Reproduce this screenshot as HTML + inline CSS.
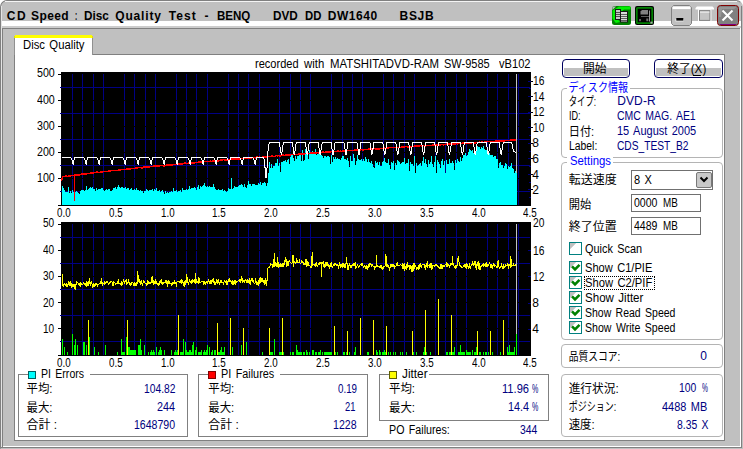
<!DOCTYPE html><html><head><meta charset="utf-8"><title>CD Speed</title><style>
html,body{margin:0;padding:0;background:#fff;}
body{width:743px;height:449px;overflow:hidden;position:relative;font-family:"Liberation Sans",sans-serif;}
#win{position:absolute;left:0;top:0;width:741px;height:448px;background:#c0c0c0;border:1px solid #808080;border-bottom-color:#c0c0c0;border-right-color:#c0c0c0;border-radius:7px 7px 0 0;box-sizing:content-box;width:741px;height:447px}
.a,.r,.t,.g,.rg,.btn,.ed,.cb,.ck{position:absolute;}
.t{white-space:pre;line-height:14px;}
.g{border:1px solid #808080;}
.rg{border:1px solid #b4b4b4;border-radius:4px;}
.btn{border:1px solid #000060;border-radius:4px;background:#fff;overflow:hidden}
.btn i{position:absolute;left:1px;right:1px;bottom:1px;height:8px;background:#c0c0c0;}
.ed{border:1px solid #707070;background:#fff;}
.cb{border:1px solid #787878;background:#c8c8c8;border-radius:2px}
.ck{width:11px;height:11px;border:1px solid #008080;background:linear-gradient(135deg,#c0c0c0 0,#c0c0c0 27%,#fff 28%);}
.jt text{font-family:"Liberation Sans","Noto Sans CJK JP",sans-serif;font-size:12px;}
</style></head><body><div id="win"></div>
<div class="r" style="left:5px;top:1px;width:732px;height:1px;background:#f4f4f4;"></div>
<div class="r" style="left:1px;top:6px;width:1px;height:441px;background:#e4e4e4;"></div>
<div class="r" style="left:2px;top:21px;width:739px;height:5px;background:#ffffff;"></div>
<div class="r" style="left:2px;top:26px;width:739px;height:2px;background:#cccccc;"></div>
<div class="r" style="left:2px;top:28px;width:739px;height:1px;background:#808080;"></div>
<div class="r" style="left:2px;top:28px;width:1px;height:419px;background:#808080;"></div>
<div class="r" style="left:740px;top:28px;width:1px;height:419px;background:#ffffff;"></div>
<div class="r" style="left:741px;top:6px;width:1px;height:442px;background:#808080;"></div>
<div class="r" style="left:3px;top:446px;width:738px;height:1px;background:#ffffff;"></div>
<div class="r" style="left:1px;top:447px;width:741px;height:1px;background:#808080;"></div>
<div class="r" style="left:14px;top:54px;width:711px;height:387px;background:#808080;"></div>
<div class="r" style="left:15px;top:55px;width:709px;height:385px;background:#ffffff;"></div>
<div class="r" style="left:14px;top:37px;width:79px;height:18px;background:#909090;"></div>
<div class="r" style="left:15px;top:38px;width:77px;height:17px;background:#ffffff;"></div>
<div class="r" style="left:15px;top:35px;width:77px;height:3px;background:#ffff00;"></div>
<div class="r" style="left:14px;top:36px;width:1px;height:2px;background:#e0e000;"></div>
<div class="r" style="left:92px;top:36px;width:1px;height:2px;background:#e0e000;"></div>
<div class="t" style="top:37.52px;font-size:12px;color:#000;left:22.60px;transform:scaleX(0.9410);transform-origin:0 0;word-spacing:1.342px;">Disc Quality</div>
<div class="t" style="top:9.22px;font-size:12px;color:#000;font-weight:bold;letter-spacing:1.568px;left:6.80px;">CD</div>
<div class="t" style="top:9.22px;font-size:12px;color:#000;font-weight:bold;letter-spacing:0.422px;left:31.00px;">Speed</div>
<div class="t" style="top:9.22px;font-size:12px;color:#000;font-weight:bold;left:75.20px;transform:scaleX(0.5505);transform-origin:0 0;">:</div>
<div class="t" style="top:9.22px;font-size:12px;color:#000;font-weight:bold;left:84.20px;transform:scaleX(0.9784);transform-origin:0 0;">Disc</div>
<div class="t" style="top:9.22px;font-size:12px;color:#000;font-weight:bold;letter-spacing:0.854px;left:115.20px;">Quality</div>
<div class="t" style="top:9.22px;font-size:12px;color:#000;font-weight:bold;letter-spacing:1.072px;left:168.70px;">Test</div>
<div class="t" style="top:9.22px;font-size:12px;color:#000;font-weight:bold;left:204.50px;">-</div>
<div class="t" style="top:9.22px;font-size:12px;color:#000;font-weight:bold;left:216.70px;transform:scaleX(0.9605);transform-origin:0 0;">BENQ</div>
<div class="t" style="top:9.22px;font-size:12px;color:#000;font-weight:bold;left:272.60px;transform:scaleX(0.9788);transform-origin:0 0;">DVD</div>
<div class="t" style="top:9.22px;font-size:12px;color:#000;font-weight:bold;left:305.10px;transform:scaleX(0.9462);transform-origin:0 0;">DD</div>
<div class="t" style="top:9.22px;font-size:12px;color:#000;font-weight:bold;letter-spacing:0.582px;left:327.70px;">DW1640</div>
<div class="t" style="top:9.22px;font-size:12px;color:#000;font-weight:bold;letter-spacing:0.663px;left:399.60px;">BSJB</div>
<svg class="a" style="left:605px;top:0" width="138" height="30" viewBox="605 0 138 30">
<!-- copy icon -->
<rect x="612" y="6" width="19" height="19" rx="2.5" fill="#008000"/>
<path d="M612.6 10.5L619 6.6H630.4V9.6H624L615.5 16.5L620 22L615.8 23L612.6 18.5Z" fill="#00f000"/>
<path d="M612.4 10V6.6H616Z" fill="#b8b8b8"/>
<rect x="615.5" y="9.5" width="5" height="10" fill="#c8c8c8" stroke="#181818"/>
<path d="M616 12.5h4M616 14.5h4M616 16.5h4" stroke="#505050"/>
<rect x="620.5" y="11.5" width="7" height="10.5" fill="#dcdcdc" stroke="#181818"/>
<path d="M621 14.5h6M621 16.5h6M621 18.5h6M621 20.5h6" stroke="#606060"/>
<!-- save icon -->
<rect x="635" y="6" width="19" height="19" rx="2" fill="#000"/>
<rect x="636.8" y="7.8" width="15.4" height="15.4" rx="1" fill="none" stroke="#008000" stroke-width="1.8"/>
<path d="M642 10h6v4.5h-7.5v-3z" fill="#808080"/>
<path d="M649.5 10.5v11" stroke="#989898"/>
<path d="M641 16.5h8" stroke="#585858"/>
<rect x="639.2" y="19" width="1.6" height="2.2" fill="#707070"/>
<rect x="646.3" y="18.5" width="2" height="2.7" fill="#707070"/>
<rect x="650.4" y="21.6" width="2.2" height="2" fill="#a8a8a8"/>
<!-- minimize -->
<path d="M673.5 5.5h16l2 2v16l-2 2h-16l-2-2v-16z" fill="#c0c0c0" stroke="#808080"/>
<rect x="672.5" y="6.5" width="18" height="2.6" fill="#fff"/>
<rect x="675.5" y="19" width="8" height="2.4" fill="#f4f4f4"/>
<rect x="676.3" y="18" width="7" height="2.6" fill="#000"/>
<!-- maximize (disabled) -->
<path d="M695.5 9.5v-1.5l1.5-1.6h15.5l1.5 1.6v1.5z" fill="#fff"/>
<rect x="698" y="9.4" width="13.4" height="12.4" fill="#fff"/>
<rect x="699.5" y="10.6" width="10.4" height="9.8" fill="#c4c4c4" stroke="#808080"/>
<rect x="700" y="11.6" width="9.4" height="1.2" fill="#e8e8e8"/>
<!-- close -->
<rect x="717.5" y="5.5" width="21" height="20" rx="3" fill="#808080" stroke="#800000"/><path d="M719 7h18l-3 2h-12l-1 8h-2z" fill="#a0a0a0" opacity="0.7"/><path d="M720 24.5h16" stroke="#800080"/>
<path d="M722.5 10.5l10 10M732.5 10.5l-10 10" stroke="#fff" stroke-width="2"/>
</svg>
<div class="t" style="top:56.82px;font-size:12px;color:#000;left:255.10px;transform:scaleX(0.9206);transform-origin:0 0;">recorded</div>
<div class="t" style="top:56.82px;font-size:12px;color:#000;left:303.50px;transform:scaleX(0.9466);transform-origin:0 0;">with</div>
<div class="t" style="top:56.82px;font-size:12px;color:#000;left:329.80px;transform:scaleX(0.9488);transform-origin:0 0;">MATSHITADVD-RAM</div>
<div class="t" style="top:56.82px;font-size:12px;color:#000;left:443.60px;transform:scaleX(0.9156);transform-origin:0 0;">SW-9585</div>
<div class="t" style="top:56.82px;font-size:12px;color:#000;left:499.30px;transform:scaleX(0.9258);transform-origin:0 0;">vB102</div>
<svg class="a" style="left:0;top:0" width="743" height="449" viewBox="0 0 743 449" shape-rendering="crispEdges"><rect x="61" y="72" width="470" height="134" fill="#000"/><path d="M61.5 72V206M61 205.5H531" stroke="#000"/><path d="M72.5 74V206M82.5 74V206M93.5 74V206M103.5 74V206M124.5 74V206M134.5 74V206M145.5 74V206M155.5 74V206M176.5 74V206M186.5 74V206M196.5 74V206M207.5 74V206M228.5 74V206M238.5 74V206M248.5 74V206M259.5 74V206M279.5 74V206M290.5 74V206M300.5 74V206M310.5 74V206M331.5 74V206M342.5 74V206M352.5 74V206M362.5 74V206M383.5 74V206M393.5 74V206M404.5 74V206M414.5 74V206M435.5 74V206M445.5 74V206M456.5 74V206M466.5 74V206M487.5 74V206M497.5 74V206M508.5 74V206M518.5 74V206" stroke="#000084" stroke-width="1" fill="none"/><path d="M61 100.5H531M61 126.5H531M61 152.5H531M61 178.5H531M61 205.5H531" stroke="#000" stroke-width="1" fill="none"/><path d="M60 87.5H530M60 113.5H530M60 139.5H530M60 165.5H530M60 191.5H530" stroke="#000084" stroke-width="1" fill="none"/><path d="M58 74.5H61M58 100.5H61M58 126.5H61M58 152.5H61M58 178.5H61M58 205.5H61" stroke="#000" stroke-width="1" fill="none"/><path d="M529 197.5H531M528 189.5H531M529 182.5H531M528 174.5H531M529 166.5H531M528 158.5H531M529 151.5H531M528 143.5H531M529 135.5H531M528 127.5H531M529 119.5H531M528 112.5H531M529 104.5H531M528 96.5H531M529 88.5H531M528 81.5H531" stroke="#000084" fill="none"/><path d="M531 189.5H533M531 174.5H533M531 158.5H533M531 143.5H533M531 127.5H533M531 112.5H533M531 96.5H533M531 81.5H533" stroke="#000" fill="none"/><path d="M516.5 74V205" stroke="#c0c0c0" shape-rendering="crispEdges"/><path d="M62 205V186H63V188H64V190H65V192H66V192H67V192H68V187H69V193H70V191H71V193H72V190H73V192H74V191H75V192H76V191H77V192H78V193H79V194H80V191H81V190H82V190H83V190H84V191H85V190H86V186H87V190H88V189H89V188H90V187H91V188H92V187H93V189H94V189H95V191H96V188H97V190H98V189H99V189H100V189H101V188H102V188H103V190H104V191H105V190H106V189H107V190H108V189H109V189H110V191H111V191H112V190H113V188H114V188H115V187H116V189H117V187H118V185H119V187H120V188H121V187H122V187H123V188H124V188H125V187H126V189H127V188H128V188H129V190H130V189H131V188H132V190H133V190H134V189H135V190H136V188H137V190H138V190H139V191H140V190H141V191H142V191H143V193H144V191H145V191H146V189H147V190H148V191H149V190H150V190H151V190H152V189H153V191H154V189H155V190H156V188H157V191H158V191H159V190H160V192H161V191H162V190H163V192H164V194H165V191H166V193H167V192H168V193H169V192H170V192H171V191H172V192H173V188H174V191H175V191H176V190H177V192H178V191H179V191H180V190H181V192H182V188H183V190H184V190H185V190H186V189H187V190H188V189H189V186H190V189H191V188H192V188H193V188H194V187H195V188H196V190H197V187H198V185H199V189H200V186H201V187H202V186H203V185H204V183H205V186H206V187H207V186H208V187H209V186H210V187H211V187H212V187H213V184H214V187H215V189H216V190H217V190H218V189H219V190H220V190H221V190H222V189H223V191H224V190H225V191H226V192H227V191H228V188H229V189H230V189H231V178H232V189H233V188H234V186H235V187H236V187H237V187H238V186H239V185H240V185H241V184H242V185H243V187H244V184H245V187H246V188H247V185H248V181H249V184H250V184H251V186H252V184H253V184H254V184H255V185H256V185H257V185H258V183H259V184H260V182H261V185H262V183H263V183H264V182H265V183H266V186H267V183H268V173H269V162H270V168H271V164H272V168H273V166H274V166H275V163H276V163H277V159H278V166H279V163H280V172H281V162H282V162H283V161H284V161H285V160H286V162H287V160H288V159H289V164H290V157H291V155H292V154H293V158H294V161H295V156H296V159H297V156H298V156H299V155H300V155H301V161H302V150H303V161H304V160H305V149H306V153H307V151H308V159H309V150H310V152H311V152H312V151H313V153H314V153H315V149H316V155H317V154H318V152H319V153H320V153H321V155H322V156H323V158H324V156H325V156H326V157H327V156H328V156H329V157H330V164H331V155H332V162H333V157H334V159H335V157H336V159H337V158H338V159H339V159H340V160H341V158H342V156H343V156H344V159H345V159H346V160H347V158H348V161H349V167H350V156H351V161H352V161H353V154H354V158H355V165H356V161H357V155H358V159H359V160H360V160H361V159H362V161H363V159H364V161H365V157H366V159H367V162H368V159H369V162H370V163H371V161H372V164H373V167H374V168H375V161H376V163H377V162H378V165H379V162H380V166H381V166H382V162H383V161H384V158H385V162H386V163H387V163H388V159H389V165H390V169H391V162H392V163H393V161H394V170H395V163H396V165H397V160H398V161H399V162H400V164H401V163H402V162H403V162H404V158H405V164H406V163H407V163H408V159H409V171H410V162H411V164H412V164H413V166H414V156H415V173H416V163H417V166H418V165H419V164H420V163H421V166H422V161H423V157H424V163H425V159H426V164H427V167H428V160H429V164H430V162H431V156H432V164H433V167H434V162H435V156H436V173H437V160H438V162H439V164H440V168H441V161H442V159H443V165H444V161H445V173H446V160H447V164H448V164H449V159H450V163H451V163H452V161H453V163H454V170H455V160H456V163H457V159H458V161H459V162H460V157H461V161H462V158H463V155H464V155H465V153H466V156H467V155H468V152H469V149H470V150H471V151H472V150H473V153H474V153H475V155H476V150H477V146H478V147H479V147H480V149H481V147H482V148H483V146H484V149H485V150H486V150H487V153H488V153H489V153H490V155H491V155H492V155H493V157H494V156H495V156H496V159H497V159H498V168H499V163H500V162H501V165H502V165H503V168H504V166H505V163H506V164H507V169H508V166H509V167H510V166H511V163H512V168H513V169H514V173H515V171H516V173H517V205Z" fill="#00ffff" shape-rendering="crispEdges"/><polyline points="61.5,181.0 62.0,179.0 63.0,176.7 64.0,176.6 65.0,176.1 66.0,176.3 67.0,176.2 68.0,176.5 69.0,175.9 70.0,176.2 71.0,175.7 72.0,175.5 73.0,175.4 74.0,175.3 75.0,175.2 76.0,175.0 77.0,174.9 78.0,174.8 79.0,175.1 80.0,174.5 81.0,174.8 82.0,173.9 83.0,174.6 84.0,174.0 85.0,173.5 86.0,174.2 87.0,173.3 88.0,173.6 89.0,173.4 90.0,173.3 91.0,172.8 92.0,173.1 93.0,173.4 94.0,172.8 95.0,172.3 96.0,172.6 97.0,172.1 98.0,172.4 99.0,172.7 100.0,172.2 101.0,172.0 102.0,171.9 103.0,171.8 104.0,171.7 105.0,171.6 106.0,171.5 107.0,171.8 108.0,171.2 109.0,171.1 110.0,171.0 111.0,170.9 112.0,170.4 113.0,170.7 114.0,170.6 115.0,170.5 116.0,170.4 117.0,170.7 118.0,170.5 119.0,169.6 120.0,169.9 121.0,169.8 122.0,169.7 123.0,169.6 124.0,169.1 125.0,169.8 126.0,169.3 127.0,168.8 128.0,169.1 129.0,169.0 130.0,168.9 131.0,168.8 132.0,168.7 133.0,168.2 134.0,168.5 135.0,168.4 136.0,167.9 137.0,168.1 138.0,167.6 139.0,167.5 140.0,167.8 141.0,167.7 142.0,168.0 143.0,167.5 144.0,167.0 145.0,166.9 146.0,167.2 147.0,167.1 148.0,167.4 149.0,166.9 150.0,166.8 151.0,166.7 152.0,166.6 153.0,166.5 154.0,166.0 155.0,166.4 156.0,165.9 157.0,166.2 158.0,166.1 159.0,166.0 160.0,165.5 161.0,165.8 162.0,165.7 163.0,165.6 164.0,165.9 165.0,165.8 166.0,165.3 167.0,165.2 168.0,165.1 169.0,165.0 170.0,164.9 171.0,164.8 172.0,165.1 173.0,164.6 174.0,164.5 175.0,164.4 176.0,164.4 177.0,164.3 178.0,164.2 179.0,164.1 180.0,164.4 181.0,163.9 182.0,164.2 183.0,163.7 184.0,163.6 185.0,163.1 186.0,163.4 187.0,163.3 188.0,163.3 189.0,163.2 190.0,163.1 191.0,162.6 192.0,162.9 193.0,162.8 194.0,163.1 195.0,162.2 196.0,162.5 197.0,162.4 198.0,162.4 199.0,161.9 200.0,162.6 201.0,162.1 202.0,162.4 203.0,162.3 204.0,161.8 205.0,161.7 206.0,161.7 207.0,161.6 208.0,161.5 209.0,161.4 210.0,161.3 211.0,161.2 212.0,161.5 213.0,160.7 214.0,161.0 215.0,161.3 216.0,161.2 217.0,161.1 218.0,160.6 219.0,160.9 220.0,160.5 221.0,160.0 222.0,159.9 223.0,159.8 224.0,159.7 225.0,160.4 226.0,159.6 227.0,159.9 228.0,159.8 229.0,159.7 230.0,159.2 231.0,159.1 232.0,159.5 233.0,159.0 234.0,159.3 235.0,159.2 236.0,158.7 237.0,159.0 238.0,159.0 239.0,158.9 240.0,158.8 241.0,158.3 242.0,158.6 243.0,158.6 244.0,158.5 245.0,158.4 246.0,158.7 247.0,157.8 248.0,158.1 249.0,158.1 250.0,158.0 251.0,157.9 252.0,157.8 253.0,157.7 254.0,157.7 255.0,157.6 256.0,157.9 257.0,157.0 258.0,157.7 259.0,157.3 260.0,157.2 261.0,157.5 262.0,157.4 263.0,157.0 264.0,156.9 265.0,156.8 266.0,157.1 267.0,156.2 268.0,156.6 269.0,156.5 270.0,156.4 271.0,156.3 272.0,155.9 273.0,156.2 274.0,156.5 275.0,156.4 276.0,155.5 277.0,155.9 278.0,155.8 279.0,155.7 280.0,156.0 281.0,155.6 282.0,155.5 283.0,155.0 284.0,155.3 285.0,155.3 286.0,155.2 287.0,154.7 288.0,155.0 289.0,155.0 290.0,154.9 291.0,154.8 292.0,154.3 293.0,154.3 294.0,154.6 295.0,154.5 296.0,154.4 297.0,154.4 298.0,154.3 299.0,154.2 300.0,154.1 301.0,154.1 302.0,153.6 303.0,154.3 304.0,153.8 305.0,153.8 306.0,153.3 307.0,153.2 308.0,153.5 309.0,153.5 310.0,153.4 311.0,152.9 312.0,152.9 313.0,152.8 314.0,153.1 315.0,152.6 316.0,153.0 317.0,152.9 318.0,152.4 319.0,153.1 320.0,152.3 321.0,152.6 322.0,152.5 323.0,152.1 324.0,152.4 325.0,152.3 326.0,151.8 327.0,152.2 328.0,152.1 329.0,152.0 330.0,152.0 331.0,151.5 332.0,151.4 333.0,152.1 334.0,151.7 335.0,151.6 336.0,151.5 337.0,151.5 338.0,151.0 339.0,151.7 340.0,151.3 341.0,151.2 342.0,151.5 343.0,151.0 344.0,151.0 345.0,150.9 346.0,151.2 347.0,150.4 348.0,150.7 349.0,150.6 350.0,150.2 351.0,150.5 352.0,150.4 353.0,150.3 354.0,150.3 355.0,149.8 356.0,150.1 357.0,149.7 358.0,150.0 359.0,149.9 360.0,149.9 361.0,149.8 362.0,149.7 363.0,150.1 364.0,149.6 365.0,149.5 366.0,149.5 367.0,149.4 368.0,149.7 369.0,148.9 370.0,148.8 371.0,149.5 372.0,149.1 373.0,149.4 374.0,148.5 375.0,148.8 376.0,148.8 377.0,149.1 378.0,148.6 379.0,149.0 380.0,148.5 381.0,148.4 382.0,148.4 383.0,148.3 384.0,147.8 385.0,148.2 386.0,148.5 387.0,148.0 388.0,148.0 389.0,147.9 390.0,147.4 391.0,147.8 392.0,147.7 393.0,147.7 394.0,147.6 395.0,147.5 396.0,147.5 397.0,147.8 398.0,147.3 399.0,147.3 400.0,147.2 401.0,147.5 402.0,147.1 403.0,147.0 404.0,147.3 405.0,146.5 406.0,146.8 407.0,146.7 408.0,147.1 409.0,146.6 410.0,146.9 411.0,146.9 412.0,146.4 413.0,146.4 414.0,146.3 415.0,145.8 416.0,146.2 417.0,146.1 418.0,146.4 419.0,146.0 420.0,145.5 421.0,145.8 422.0,145.8 423.0,145.3 424.0,145.6 425.0,145.6 426.0,145.9 427.0,145.5 428.0,145.4 429.0,145.3 430.0,145.7 431.0,145.2 432.0,145.5 433.0,145.1 434.0,145.0 435.0,145.0 436.0,144.9 437.0,145.2 438.0,145.2 439.0,144.7 440.0,145.0 441.0,144.6 442.0,144.5 443.0,144.9 444.0,144.8 445.0,144.3 446.0,144.3 447.0,144.2 448.0,144.1 449.0,144.1 450.0,144.0 451.0,143.6 452.0,143.9 453.0,143.8 454.0,144.2 455.0,144.1 456.0,143.6 457.0,143.6 458.0,143.9 459.0,143.5 460.0,143.4 461.0,143.3 462.0,143.3 463.0,143.2 464.0,143.2 465.0,143.1 466.0,142.6 467.0,143.0 468.0,142.9 469.0,142.9 470.0,142.8 471.0,143.1 472.0,142.7 473.0,142.6 474.0,142.6 475.0,142.9 476.0,142.8 477.0,142.4 478.0,142.3 479.0,142.3 480.0,142.2 481.0,142.5 482.0,142.1 483.0,142.4 484.0,142.4 485.0,141.9 486.0,141.8 487.0,141.8 488.0,141.7 489.0,141.7 490.0,141.6 491.0,141.9 492.0,141.9 493.0,141.4 494.0,141.4 495.0,141.3 496.0,141.2 497.0,141.2 498.0,141.1 499.0,141.1 500.0,141.0 501.0,140.9 502.0,140.9 503.0,140.8 504.0,141.2 505.0,140.7 506.0,140.2 507.0,140.6 508.0,140.5 509.0,140.5 510.0,140.8 511.0,140.0 512.0,140.3 513.0,140.2 514.0,139.8 515.0,140.1 516.0,140.1" fill="none" stroke="#ff0000" stroke-width="1.5" shape-rendering="crispEdges"/><path d="M74.5 174V201" stroke="#ff0000" stroke-width="1.6" shape-rendering="crispEdges"/><polyline points="62.0,157.5 70.1,157.5 71.3,158.5 72.3,161.0 73.3,165.0 74.1,159.5 74.9,157.5 83.1,157.5 84.3,158.5 85.3,161.0 86.3,165.0 87.1,159.5 87.9,157.5 96.1,157.5 97.3,158.5 98.3,161.0 99.3,165.0 100.1,159.5 100.9,157.5 109.1,157.5 110.3,158.5 111.3,161.0 112.3,165.0 113.1,159.5 113.9,157.5 122.1,157.5 123.3,158.5 124.3,161.0 125.3,165.0 126.1,159.5 126.9,157.5 135.1,157.5 136.3,158.5 137.3,161.0 138.3,165.0 139.1,159.5 139.9,157.5 148.1,157.5 149.3,158.5 150.3,161.0 151.3,165.0 152.1,159.5 152.9,157.5 161.1,157.5 162.3,158.5 163.3,161.0 164.3,165.0 165.1,159.5 165.9,157.5 174.1,157.5 175.3,158.5 176.3,161.0 177.3,165.0 178.1,159.5 178.9,157.5 187.1,157.5 188.3,158.5 189.3,161.0 190.3,165.0 191.1,159.5 191.9,157.5 200.1,157.5 201.3,158.5 202.3,161.0 203.3,165.0 204.1,159.5 204.9,157.5 213.1,157.5 214.3,158.5 215.3,161.0 216.3,165.0 217.1,159.5 217.9,157.5 226.1,157.5 227.3,158.5 228.3,161.0 229.3,165.0 230.1,159.5 230.9,157.5 239.1,157.5 240.3,158.5 241.3,161.0 242.3,165.0 243.1,159.5 243.9,157.5 252.1,157.5 253.3,158.5 254.3,161.0 255.3,165.0 256.1,159.5 256.9,157.5 263.8,157.5 264.8,164.0 265.6,177.5 266.6,177.5 267.4,160.0 268.4,146.0 269.5,142.5 279.4,142.5 280.9,152.5 281.4,155.0 281.9,152.5 283.4,142.5 292.3,142.5 293.8,152.5 294.3,155.0 294.8,152.5 296.3,142.5 305.3,142.5 306.8,152.5 307.3,155.0 307.8,152.5 309.3,142.5 318.2,142.5 319.7,152.5 320.2,155.0 320.7,152.5 322.2,142.5 331.1,142.5 332.6,152.5 333.1,155.0 333.6,152.5 335.1,142.5 344.0,142.5 345.5,152.5 346.0,155.0 346.5,152.5 348.0,142.5 357.0,142.5 358.5,152.5 359.0,155.0 359.5,152.5 361.0,142.5 369.9,142.5 371.4,152.5 371.9,155.0 372.4,152.5 373.9,142.5 382.8,142.5 384.3,152.5 384.8,155.0 385.3,152.5 386.8,142.5 395.8,142.5 397.3,152.5 397.8,155.0 398.3,152.5 399.8,142.5 408.7,142.5 410.2,152.5 410.7,155.0 411.2,152.5 412.7,142.5 421.6,142.5 423.1,152.5 423.6,155.0 424.1,152.5 425.6,142.5 434.6,142.5 436.1,152.5 436.6,155.0 437.1,152.5 438.6,142.5 447.5,142.5 449.0,152.5 449.5,155.0 450.0,152.5 451.5,142.5 460.4,142.5 461.9,152.5 462.4,155.0 462.9,152.5 464.4,142.5 473.3,142.5 474.8,152.5 475.3,155.0 475.8,152.5 477.3,142.5 486.3,142.5 487.8,152.5 488.3,155.0 488.8,152.5 490.3,142.5 499.2,142.5 500.7,152.5 501.2,155.0 501.7,152.5 503.2,142.5 511.7,142.5 513.5,151.5 516.0,152.5" fill="none" stroke="#ffffff" stroke-width="1" shape-rendering="crispEdges"/><rect x="61" y="222" width="470" height="134" fill="#000"/><path d="M61.5 222V356M61 355.5H531" stroke="#000"/><path d="M72.5 224V356M82.5 224V356M93.5 224V356M103.5 224V356M124.5 224V356M134.5 224V356M145.5 224V356M155.5 224V356M176.5 224V356M186.5 224V356M196.5 224V356M207.5 224V356M228.5 224V356M238.5 224V356M248.5 224V356M259.5 224V356M279.5 224V356M290.5 224V356M300.5 224V356M310.5 224V356M331.5 224V356M342.5 224V356M352.5 224V356M362.5 224V356M383.5 224V356M393.5 224V356M404.5 224V356M414.5 224V356M435.5 224V356M445.5 224V356M456.5 224V356M466.5 224V356M487.5 224V356M497.5 224V356M508.5 224V356M518.5 224V356" stroke="#000084" stroke-width="1" fill="none"/><path d="M61 250.5H531M61 276.5H531M61 302.5H531M61 328.5H531M61 355.5H531" stroke="#000" stroke-width="1" fill="none"/><path d="M60 237.5H530M60 263.5H530M60 289.5H530M60 315.5H530M60 341.5H530" stroke="#000084" stroke-width="1" fill="none"/><path d="M58 224.5H61M58 250.5H61M58 276.5H61M58 302.5H61M58 328.5H61M58 355.5H61" stroke="#000" stroke-width="1" fill="none"/><path d="M528 329.5H531M528 303.5H531M528 276.5H531M528 250.5H531" stroke="#000084" fill="none"/><path d="M62.5 355v-16M64.5 355v-8M67.5 355v-3M72.5 355v-21M74.5 355v-10M75.5 355v-16M77.5 355v-10M83.5 355v-13M84.5 355v-13M86.5 355v-10M89.5 355v-18M94.5 355v-8M98.5 355v-3M105.5 355v-10M117.5 355v-3M121.5 355v-16M122.5 355v-3M123.5 355v-3M124.5 355v-3M126.5 355v-18M127.5 355v-18M128.5 355v-8M129.5 355v-8M130.5 355v-5M131.5 355v-5M132.5 355v-5M133.5 355v-5M134.5 355v-5M135.5 355v-5M138.5 355v-10M139.5 355v-10M140.5 355v-16M141.5 355v-5M144.5 355v-10M148.5 355v-3M150.5 355v-3M151.5 355v-5M152.5 355v-3M153.5 355v-5M154.5 355v-3M156.5 355v-8M158.5 355v-3M159.5 355v-5M160.5 355v-8M161.5 355v-5M164.5 355v-5M171.5 355v-5M174.5 355v-3M175.5 355v-5M176.5 355v-3M177.5 355v-5M178.5 355v-3M180.5 355v-3M181.5 355v-3M182.5 355v-3M183.5 355v-16M185.5 355v-13M186.5 355v-5M187.5 355v-3M188.5 355v-3M189.5 355v-5M190.5 355v-5M191.5 355v-3M192.5 355v-10M193.5 355v-13M195.5 355v-5M196.5 355v-8M198.5 355v-3M199.5 355v-3M200.5 355v-3M201.5 355v-5M203.5 355v-3M204.5 355v-5M205.5 355v-3M206.5 355v-5M207.5 355v-10M209.5 355v-8M211.5 355v-3M212.5 355v-5M214.5 355v-5M215.5 355v-5M217.5 355v-3M218.5 355v-3M219.5 355v-3M220.5 355v-5M221.5 355v-8M222.5 355v-3M223.5 355v-3M224.5 355v-8M230.5 355v-8M232.5 355v-8M241.5 355v-10M246.5 355v-13M262.5 355v-3M270.5 355v-3M271.5 355v-3M272.5 355v-3M274.5 355v-16M279.5 355v-3M280.5 355v-3M281.5 355v-3M283.5 355v-3M290.5 355v-3M292.5 355v-3M293.5 355v-3M296.5 355v-10M297.5 355v-5M298.5 355v-3M299.5 355v-3M300.5 355v-3M301.5 355v-3M303.5 355v-3M304.5 355v-3M306.5 355v-5M307.5 355v-3M309.5 355v-3M312.5 355v-5M313.5 355v-5M315.5 355v-3M316.5 355v-3M318.5 355v-3M319.5 355v-3M320.5 355v-5M322.5 355v-3M324.5 355v-3M325.5 355v-3M326.5 355v-3M327.5 355v-3M328.5 355v-3M329.5 355v-3M330.5 355v-3M331.5 355v-3M335.5 355v-3M337.5 355v-3M343.5 355v-3M344.5 355v-3M346.5 355v-3M349.5 355v-3M354.5 355v-3M355.5 355v-8M367.5 355v-3M368.5 355v-3M376.5 355v-5M377.5 355v-3M379.5 355v-5M380.5 355v-3M382.5 355v-3M383.5 355v-3M384.5 355v-5M385.5 355v-3M388.5 355v-3M390.5 355v-3M393.5 355v-3M395.5 355v-3M400.5 355v-3M402.5 355v-3M406.5 355v-3M413.5 355v-3M416.5 355v-3M423.5 355v-3M424.5 355v-8M426.5 355v-3M430.5 355v-3M446.5 355v-3M447.5 355v-3M449.5 355v-3M450.5 355v-3M451.5 355v-3M452.5 355v-3M453.5 355v-3M454.5 355v-8M458.5 355v-3M459.5 355v-3M460.5 355v-10M461.5 355v-3M462.5 355v-3M463.5 355v-3M464.5 355v-3M466.5 355v-5M467.5 355v-3M468.5 355v-3M469.5 355v-3M470.5 355v-3M472.5 355v-5M474.5 355v-3M475.5 355v-3M476.5 355v-8M477.5 355v-3M479.5 355v-3M480.5 355v-3M483.5 355v-3M485.5 355v-3M486.5 355v-3M488.5 355v-3M490.5 355v-3M492.5 355v-3M500.5 355v-3M507.5 355v-8M508.5 355v-3M509.5 355v-10M510.5 355v-3M511.5 355v-3M512.5 355v-3M513.5 355v-3M514.5 355v-8M516.5 355v-21" stroke="#00ff00" shape-rendering="crispEdges"/><path d="M88.5 355V320M127.5 355V320M178.5 355V315M217.5 355V323M230.5 355V318M243.5 355V328M269.5 355V328M282.5 355V318M334.5 355V326M347.5 355V331M360.5 355V318M373.5 355V320M386.5 355V326M412.5 355V331M425.5 355V310M438.5 355V299M451.5 355V315M477.5 355V331M490.5 355V331M503.5 355V320" stroke="#ffff00" shape-rendering="crispEdges"/><polyline points="62.0,274.0 62.5,285.3 63.0,285.5 63.6,286.0 64.1,283.5 64.7,284.6 65.2,285.7 65.8,284.4 66.3,284.1 66.9,286.4 67.4,286.7 68.0,283.7 68.5,282.3 69.1,285.2 69.6,284.0 70.2,280.7 70.7,284.1 71.3,287.5 71.8,284.6 72.4,285.6 72.9,283.7 73.5,286.1 74.0,287.0 74.6,283.8 75.1,289.6 75.7,285.7 76.2,283.7 76.8,282.0 77.3,282.1 77.9,282.6 78.4,284.1 79.0,283.4 79.5,284.5 80.1,282.8 80.6,285.3 81.2,283.9 81.7,284.9 82.3,284.7 82.8,285.0 83.4,282.8 83.9,283.2 84.5,284.2 85.0,285.3 85.6,283.8 86.1,286.6 86.7,281.4 87.2,286.1 87.8,282.8 88.3,281.1 88.9,285.6 89.4,278.2 90.0,282.1 90.5,284.5 91.1,283.3 91.6,282.2 92.2,284.9 92.7,287.1 93.3,286.0 93.8,283.0 94.4,285.1 94.9,286.7 95.5,284.0 96.0,283.5 96.6,284.4 97.1,284.1 97.7,287.1 98.2,284.3 98.8,284.8 99.3,283.6 99.9,283.7 100.4,282.3 101.0,284.2 101.5,278.3 102.1,282.3 102.6,285.6 103.2,283.5 103.7,283.6 104.3,282.3 104.8,284.5 105.4,282.2 105.9,282.7 106.5,281.8 107.0,281.3 107.6,281.9 108.1,283.0 108.7,284.2 109.2,283.1 109.8,282.6 110.3,282.6 110.9,281.0 111.4,281.4 112.0,281.6 112.5,282.9 113.1,286.2 113.6,281.2 114.2,282.9 114.7,282.8 115.3,283.3 115.8,284.7 116.4,283.4 116.9,283.1 117.5,281.8 118.0,283.7 118.6,279.1 119.1,283.6 119.7,283.1 120.2,283.1 120.8,284.1 121.3,282.7 121.9,285.8 122.4,283.8 123.0,281.7 123.5,280.1 124.1,281.4 124.6,282.9 125.2,281.3 125.7,281.0 126.3,278.7 126.8,285.2 127.4,282.8 127.9,282.3 128.5,279.3 129.0,282.5 129.6,284.9 130.1,282.8 130.7,285.6 131.2,282.0 131.8,283.9 132.3,282.6 132.9,282.6 133.4,283.2 134.0,285.6 134.5,282.6 135.1,284.4 135.6,285.1 136.2,282.9 136.7,284.7 137.3,283.9 137.8,271.5 138.4,280.3 138.9,281.8 139.5,280.3 140.0,283.1 140.6,284.0 141.1,280.0 141.7,282.4 142.2,285.1 142.8,285.2 143.3,281.3 143.9,280.7 144.4,281.4 145.0,282.9 145.6,283.6 146.1,284.4 146.7,286.3 147.2,280.4 147.8,285.1 148.3,280.9 148.9,284.4 149.4,282.0 150.0,284.3 150.5,282.3 151.1,282.5 151.6,279.5 152.2,276.2 152.7,281.7 153.3,284.5 153.8,280.5 154.4,282.1 154.9,283.2 155.5,278.7 156.0,284.2 156.6,282.1 157.1,284.0 157.7,284.1 158.2,283.4 158.8,285.6 159.3,284.6 159.9,281.4 160.4,281.8 161.0,280.6 161.5,278.6 162.1,284.5 162.6,281.9 163.2,283.8 163.7,282.1 164.3,282.2 164.8,282.8 165.4,281.3 165.9,282.8 166.5,281.5 167.0,284.1 167.6,286.8 168.1,280.4 168.7,283.9 169.2,281.8 169.8,283.5 170.3,283.0 170.9,283.1 171.4,284.7 172.0,285.3 172.5,282.2 173.1,282.0 173.6,282.5 174.2,284.0 174.7,279.9 175.3,283.7 175.8,282.8 176.4,287.0 176.9,282.1 177.5,281.1 178.0,281.2 178.6,281.9 179.1,282.3 179.7,282.8 180.2,280.4 180.8,282.7 181.3,279.4 181.9,283.0 182.4,281.6 183.0,283.3 183.5,282.6 184.1,286.6 184.6,281.7 185.2,281.0 185.7,283.6 186.3,282.4 186.8,274.3 187.4,282.9 187.9,281.7 188.5,283.4 189.0,282.3 189.6,279.1 190.1,282.1 190.7,282.0 191.2,280.8 191.8,283.5 192.3,282.9 192.9,279.4 193.4,281.6 194.0,282.2 194.5,279.1 195.1,283.6 195.6,273.0 196.2,281.3 196.7,282.9 197.3,282.7 197.8,281.9 198.4,284.1 198.9,277.1 199.5,280.1 200.0,282.5 200.6,282.3 201.1,281.8 201.7,281.1 202.2,281.2 202.8,281.2 203.3,281.9 203.9,284.7 204.4,281.4 205.0,282.5 205.5,284.3 206.1,283.2 206.6,281.9 207.2,281.3 207.7,282.6 208.3,279.0 208.8,281.9 209.4,281.8 209.9,283.8 210.5,282.7 211.0,279.6 211.6,283.0 212.1,282.0 212.7,279.7 213.2,278.8 213.8,282.3 214.3,283.6 214.9,280.9 215.4,284.4 216.0,282.9 216.5,279.8 217.1,280.5 217.6,284.0 218.2,282.4 218.7,278.6 219.3,284.5 219.8,283.1 220.4,280.6 220.9,283.0 221.5,280.2 222.0,283.1 222.6,282.4 223.1,282.9 223.7,284.9 224.2,280.4 224.8,280.4 225.3,282.3 225.9,282.9 226.4,280.1 227.0,284.7 227.5,281.3 228.1,281.6 228.6,280.0 229.2,279.2 229.7,281.0 230.3,280.7 230.8,280.8 231.4,282.6 231.9,284.3 232.5,280.3 233.0,284.9 233.6,281.8 234.1,280.4 234.7,281.3 235.2,285.4 235.8,281.6 236.3,282.4 236.9,281.4 237.4,281.4 238.0,281.0 238.5,280.1 239.1,279.8 239.6,282.3 240.2,279.6 240.7,281.6 241.3,280.8 241.8,277.5 242.4,279.0 242.9,282.8 243.5,280.1 244.0,280.3 244.6,282.4 245.1,279.8 245.7,279.9 246.2,280.9 246.8,283.3 247.3,279.2 247.9,282.9 248.4,281.0 249.0,281.3 249.5,278.2 250.1,284.9 250.6,282.7 251.2,278.4 251.7,280.7 252.3,278.4 252.8,282.1 253.4,279.7 253.9,282.9 254.5,283.3 255.0,283.3 255.6,277.6 256.1,281.8 256.7,283.8 257.2,281.7 257.8,284.4 258.3,285.0 258.9,280.4 259.4,278.4 260.0,283.5 260.5,278.2 261.1,278.8 261.6,281.4 262.2,281.2 262.7,278.3 263.3,281.8 263.8,280.7 264.4,280.8 264.9,285.1 265.5,279.3 266.0,280.1 266.6,285.5 267.1,280.0 267.7,270.0 268.2,267.3 268.8,267.0 269.3,267.4 269.9,266.3 270.4,264.1 271.0,264.8 271.5,264.9 272.1,264.9 272.6,268.4 273.2,265.7 273.7,265.4 274.3,252.8 274.8,266.7 275.4,265.2 275.9,262.9 276.5,264.4 277.0,267.1 277.6,257.5 278.1,262.9 278.7,267.5 279.2,263.8 279.8,265.8 280.3,264.4 280.9,266.1 281.4,263.8 282.0,267.3 282.5,265.6 283.1,263.0 283.6,267.1 284.2,264.5 284.7,260.5 285.3,262.2 285.8,258.8 286.4,260.1 286.9,266.6 287.5,260.7 288.0,266.0 288.6,262.0 289.1,261.4 289.7,260.5 290.2,262.6 290.8,262.6 291.3,263.2 291.9,262.9 292.4,262.2 293.0,254.6 293.5,266.8 294.1,261.2 294.6,262.3 295.2,262.9 295.7,263.1 296.3,262.0 296.8,258.3 297.4,262.3 297.9,262.2 298.5,262.1 299.0,262.0 299.6,260.4 300.1,263.1 300.7,263.9 301.2,262.7 301.8,260.4 302.3,262.6 302.9,262.3 303.4,262.8 304.0,264.5 304.5,263.4 305.1,263.8 305.6,259.5 306.2,266.5 306.7,258.9 307.3,262.6 307.8,266.0 308.4,261.8 308.9,265.4 309.5,265.7 310.0,265.7 310.6,267.1 311.1,267.2 311.7,262.1 312.2,252.3 312.8,266.2 313.3,264.0 313.9,264.2 314.4,265.2 315.0,265.2 315.5,267.3 316.1,262.0 316.6,264.6 317.2,266.8 317.7,266.3 318.3,263.4 318.8,263.0 319.4,265.2 319.9,262.4 320.5,262.6 321.0,263.8 321.6,264.8 322.1,261.9 322.7,263.5 323.2,261.0 323.8,265.7 324.3,268.1 324.9,264.4 325.4,262.4 326.0,266.6 326.5,262.4 327.1,262.5 327.6,264.3 328.2,266.1 328.7,264.9 329.3,265.7 329.8,268.6 330.4,263.3 330.9,264.9 331.5,263.4 332.0,266.5 332.6,267.5 333.1,265.3 333.7,264.1 334.2,263.9 334.8,266.3 335.3,263.3 335.9,264.5 336.4,264.6 337.0,265.4 337.5,264.9 338.1,265.7 338.6,269.1 339.2,265.2 339.7,263.2 340.3,265.0 340.8,268.1 341.4,264.3 341.9,264.7 342.5,268.3 343.0,262.9 343.6,265.2 344.1,267.8 344.7,265.9 345.2,262.7 345.8,267.7 346.3,256.7 346.9,263.3 347.4,264.4 348.0,270.0 348.5,265.8 349.1,265.6 349.6,263.2 350.2,267.9 350.7,266.2 351.3,267.3 351.8,265.6 352.4,265.1 352.9,265.7 353.5,264.3 354.0,263.5 354.6,265.9 355.1,262.4 355.7,267.5 356.2,266.5 356.8,267.2 357.3,264.6 357.9,265.2 358.4,267.2 359.0,266.7 359.5,265.8 360.1,264.7 360.6,264.4 361.2,263.5 361.7,265.1 362.3,264.3 362.8,265.8 363.4,267.5 363.9,267.1 364.5,265.5 365.0,266.2 365.6,267.4 366.1,269.3 366.7,264.9 367.2,269.8 367.8,268.3 368.3,264.1 368.9,267.9 369.4,263.8 370.0,263.3 370.5,264.8 371.1,264.5 371.6,266.1 372.2,264.5 372.7,265.3 373.3,266.5 373.8,266.0 374.4,268.2 374.9,266.3 375.5,266.5 376.0,267.8 376.6,255.0 377.1,267.1 377.7,266.6 378.2,266.0 378.8,266.3 379.3,267.3 379.9,266.6 380.4,267.1 381.0,265.3 381.5,268.2 382.1,268.4 382.6,269.0 383.2,265.7 383.7,267.4 384.3,266.1 384.8,266.4 385.4,264.1 385.9,253.6 386.5,266.2 387.0,265.9 387.6,263.9 388.1,267.9 388.7,266.2 389.2,267.9 389.8,270.4 390.3,264.4 390.9,266.2 391.4,264.2 392.0,267.1 392.5,265.3 393.1,267.0 393.6,264.6 394.2,268.5 394.7,265.6 395.3,266.4 395.8,266.5 396.4,263.9 396.9,265.2 397.5,263.8 398.0,265.9 398.6,265.1 399.1,265.2 399.7,265.6 400.2,265.0 400.8,264.5 401.3,265.7 401.9,265.4 402.4,264.5 403.0,268.6 403.5,266.7 404.1,263.3 404.6,269.2 405.2,268.0 405.7,267.0 406.3,268.6 406.8,265.7 407.4,262.0 407.9,267.7 408.5,266.1 409.0,264.7 409.6,268.3 410.1,267.0 410.7,265.7 411.2,271.5 411.8,267.1 412.3,265.0 412.9,272.0 413.4,265.8 414.0,262.8 414.5,269.1 415.1,266.8 415.6,264.9 416.2,267.3 416.7,269.1 417.3,266.9 417.8,269.0 418.4,264.7 418.9,269.7 419.5,265.1 420.0,265.5 420.6,264.1 421.1,267.3 421.7,265.9 422.2,264.7 422.8,264.5 423.3,264.3 423.9,264.9 424.4,267.6 425.0,264.4 425.5,269.9 426.1,265.9 426.6,263.8 427.2,262.8 427.7,266.5 428.3,265.7 428.8,265.6 429.4,264.8 429.9,268.2 430.5,264.6 431.0,263.1 431.6,270.2 432.1,269.0 432.7,265.8 433.2,265.7 433.8,265.8 434.3,266.1 434.9,265.7 435.4,265.3 436.0,264.4 436.5,265.2 437.1,265.7 437.6,266.0 438.2,267.9 438.7,267.0 439.3,268.1 439.8,267.1 440.4,268.6 440.9,264.5 441.5,264.8 442.0,268.9 442.6,265.5 443.1,265.1 443.7,266.4 444.2,266.7 444.8,265.5 445.3,264.3 445.9,264.1 446.4,262.6 447.0,267.1 447.5,263.6 448.1,265.2 448.6,265.0 449.2,265.9 449.7,266.8 450.3,263.4 450.8,265.9 451.4,263.6 451.9,264.7 452.5,256.0 453.0,264.7 453.6,263.9 454.1,266.6 454.7,267.2 455.2,267.7 455.8,265.1 456.3,267.5 456.9,265.7 457.4,265.3 458.0,258.1 458.5,256.0 459.1,263.2 459.6,264.9 460.2,265.9 460.7,265.7 461.3,267.2 461.8,266.7 462.4,267.1 462.9,267.3 463.5,265.9 464.0,265.7 464.6,266.2 465.1,264.1 465.7,267.7 466.2,262.8 466.8,268.5 467.3,263.8 467.9,266.3 468.4,267.1 469.0,268.4 469.5,262.7 470.1,266.1 470.6,267.7 471.2,265.7 471.7,265.8 472.3,263.3 472.8,261.4 473.4,265.3 473.9,265.0 474.5,264.2 475.0,261.1 475.6,263.0 476.1,269.6 476.7,267.7 477.2,262.4 477.8,264.1 478.3,268.5 478.9,261.3 479.4,266.8 480.0,269.9 480.5,266.3 481.1,266.5 481.6,265.5 482.2,264.6 482.7,265.0 483.3,265.8 483.8,263.1 484.4,265.2 484.9,264.3 485.5,264.0 486.0,266.8 486.6,262.5 487.1,266.7 487.7,264.6 488.2,264.8 488.8,265.3 489.3,262.4 489.9,263.1 490.4,267.5 491.0,264.5 491.5,267.1 492.1,268.3 492.6,266.1 493.2,265.5 493.7,263.4 494.3,266.7 494.8,264.9 495.4,265.7 495.9,265.6 496.5,266.4 497.0,268.3 497.6,263.3 498.1,260.5 498.7,265.2 499.2,268.5 499.8,268.0 500.3,266.4 500.9,267.7 501.4,263.1 502.0,267.3 502.5,266.5 503.1,269.1 503.6,264.4 504.2,267.7 504.7,266.9 505.3,266.0 505.8,264.9 506.4,265.8 506.9,265.8 507.5,264.9 508.0,263.5 508.6,267.2 509.1,266.1 509.7,264.4 510.2,267.5 510.8,256.2 511.3,262.2 511.9,266.5 512.4,265.4 513.0,265.1 513.5,263.9 514.1,266.2 514.6,265.5 515.2,265.8 515.7,264.3" fill="none" stroke="#ffff00" stroke-width="1" shape-rendering="crispEdges"/><path d="M321.5 262V277" stroke="#ffff00" shape-rendering="crispEdges"/><path d="M516.5 224V334" stroke="#c0c0c0" shape-rendering="crispEdges"/></svg>
<div class="t" style="top:66.42px;font-size:12px;color:#000;left:36.80px;transform:scaleX(0.8890);transform-origin:0 0;">500</div>
<div class="t" style="top:93.32px;font-size:12px;color:#000;left:36.80px;transform:scaleX(0.8890);transform-origin:0 0;">400</div>
<div class="t" style="top:119.12px;font-size:12px;color:#000;left:36.80px;transform:scaleX(0.8890);transform-origin:0 0;">300</div>
<div class="t" style="top:145.12px;font-size:12px;color:#000;left:36.80px;transform:scaleX(0.8890);transform-origin:0 0;">200</div>
<div class="t" style="top:171.12px;font-size:12px;color:#000;left:36.80px;transform:scaleX(0.8890);transform-origin:0 0;">100</div>
<div class="t" style="top:183.06px;font-size:12px;color:#000;left:532.26px;">2</div>
<div class="t" style="top:167.50px;font-size:12px;color:#000;left:532.26px;">4</div>
<div class="t" style="top:151.94px;font-size:12px;color:#000;left:532.26px;">6</div>
<div class="t" style="top:136.38px;font-size:12px;color:#000;left:532.26px;">8</div>
<div class="t" style="top:120.82px;font-size:12px;color:#000;left:532.80px;transform:scaleX(0.8541);transform-origin:0 0;">10</div>
<div class="t" style="top:105.26px;font-size:12px;color:#000;left:532.80px;transform:scaleX(0.8541);transform-origin:0 0;">12</div>
<div class="t" style="top:89.70px;font-size:12px;color:#000;left:532.80px;transform:scaleX(0.8541);transform-origin:0 0;">14</div>
<div class="t" style="top:74.14px;font-size:12px;color:#000;left:532.80px;transform:scaleX(0.8541);transform-origin:0 0;">16</div>
<div class="t" style="top:205.82px;font-size:12px;color:#000;left:56.80px;transform:scaleX(0.8153);transform-origin:0 0;">0.0</div>
<div class="t" style="top:355.82px;font-size:12px;color:#000;left:56.80px;transform:scaleX(0.8153);transform-origin:0 0;">0.0</div>
<div class="t" style="top:205.82px;font-size:12px;color:#000;left:108.65px;transform:scaleX(0.8153);transform-origin:0 0;">0.5</div>
<div class="t" style="top:355.82px;font-size:12px;color:#000;left:108.65px;transform:scaleX(0.8153);transform-origin:0 0;">0.5</div>
<div class="t" style="top:205.82px;font-size:12px;color:#000;left:160.50px;transform:scaleX(0.8153);transform-origin:0 0;">1.0</div>
<div class="t" style="top:355.82px;font-size:12px;color:#000;left:160.50px;transform:scaleX(0.8153);transform-origin:0 0;">1.0</div>
<div class="t" style="top:205.82px;font-size:12px;color:#000;left:212.35px;transform:scaleX(0.8153);transform-origin:0 0;">1.5</div>
<div class="t" style="top:355.82px;font-size:12px;color:#000;left:212.35px;transform:scaleX(0.8153);transform-origin:0 0;">1.5</div>
<div class="t" style="top:205.82px;font-size:12px;color:#000;left:264.20px;transform:scaleX(0.8153);transform-origin:0 0;">2.0</div>
<div class="t" style="top:355.82px;font-size:12px;color:#000;left:264.20px;transform:scaleX(0.8153);transform-origin:0 0;">2.0</div>
<div class="t" style="top:205.82px;font-size:12px;color:#000;left:316.05px;transform:scaleX(0.8153);transform-origin:0 0;">2.5</div>
<div class="t" style="top:355.82px;font-size:12px;color:#000;left:316.05px;transform:scaleX(0.8153);transform-origin:0 0;">2.5</div>
<div class="t" style="top:205.82px;font-size:12px;color:#000;left:367.90px;transform:scaleX(0.8153);transform-origin:0 0;">3.0</div>
<div class="t" style="top:355.82px;font-size:12px;color:#000;left:367.90px;transform:scaleX(0.8153);transform-origin:0 0;">3.0</div>
<div class="t" style="top:205.82px;font-size:12px;color:#000;left:419.75px;transform:scaleX(0.8153);transform-origin:0 0;">3.5</div>
<div class="t" style="top:355.82px;font-size:12px;color:#000;left:419.75px;transform:scaleX(0.8153);transform-origin:0 0;">3.5</div>
<div class="t" style="top:205.82px;font-size:12px;color:#000;left:471.60px;transform:scaleX(0.8153);transform-origin:0 0;">4.0</div>
<div class="t" style="top:355.82px;font-size:12px;color:#000;left:471.60px;transform:scaleX(0.8153);transform-origin:0 0;">4.0</div>
<div class="t" style="top:205.82px;font-size:12px;color:#000;left:523.45px;transform:scaleX(0.8153);transform-origin:0 0;">4.5</div>
<div class="t" style="top:355.82px;font-size:12px;color:#000;left:523.45px;transform:scaleX(0.8153);transform-origin:0 0;">4.5</div>
<div class="t" style="top:215.82px;font-size:12px;color:#000;left:43.00px;transform:scaleX(0.8391);transform-origin:0 0;">50</div>
<div class="t" style="top:243.42px;font-size:12px;color:#000;left:43.00px;transform:scaleX(0.8391);transform-origin:0 0;">40</div>
<div class="t" style="top:269.42px;font-size:12px;color:#000;left:43.00px;transform:scaleX(0.8391);transform-origin:0 0;">30</div>
<div class="t" style="top:295.62px;font-size:12px;color:#000;left:43.00px;transform:scaleX(0.8391);transform-origin:0 0;">20</div>
<div class="t" style="top:322.12px;font-size:12px;color:#000;left:43.00px;transform:scaleX(0.8391);transform-origin:0 0;">10</div>
<div class="t" style="top:215.62px;font-size:12px;color:#000;left:532.80px;transform:scaleX(0.8541);transform-origin:0 0;">20</div>
<div class="t" style="top:243.82px;font-size:12px;color:#000;left:532.80px;transform:scaleX(0.8541);transform-origin:0 0;">16</div>
<div class="t" style="top:270.02px;font-size:12px;color:#000;left:532.80px;transform:scaleX(0.8541);transform-origin:0 0;">12</div>
<div class="t" style="top:296.22px;font-size:12px;color:#000;left:532.26px;">8</div>
<div class="t" style="top:322.42px;font-size:12px;color:#000;left:532.26px;">4</div>
<div class="g" style="left:18px;top:374px;width:168px;height:61px;border-color:#808080"></div>
<div class="r" style="left:36px;top:370px;width:54px;height:10px;background:#fff;"></div>
<div class="r" style="left:28px;top:371px;width:8px;height:8px;background:#00ffff;border:1px solid #006060;box-sizing:border-box"></div>
<div class="t" style="top:367.12px;font-size:12px;color:#000;left:40.90px;transform:scaleX(0.8772);transform-origin:0 0;word-spacing:1.682px;">PI Errors</div>
<div class="g" style="left:198px;top:374px;width:168px;height:61px;border-color:#808080"></div>
<div class="r" style="left:216px;top:370px;width:64px;height:10px;background:#fff;"></div>
<div class="r" style="left:208px;top:371px;width:8px;height:8px;background:#ff0000;border:1px solid #800000;box-sizing:border-box"></div>
<div class="t" style="top:367.12px;font-size:12px;color:#000;left:220.90px;transform:scaleX(0.9034);transform-origin:0 0;word-spacing:1.536px;">PI Failures</div>
<div class="g" style="left:379px;top:374px;width:168px;height:45px;border-color:#808080"></div>
<div class="r" style="left:397px;top:370px;width:32px;height:10px;background:#fff;"></div>
<div class="r" style="left:389px;top:371px;width:8px;height:8px;background:#ffff00;border:1px solid #606000;box-sizing:border-box"></div>
<div class="t" style="top:367.12px;font-size:12px;color:#000;left:402.00px;transform:scaleX(0.9845);transform-origin:0 0;">Jitter</div>
<div class="t" style="top:381.52px;font-size:12px;color:#000080;left:143.90px;transform:scaleX(0.8555);transform-origin:0 0;">104.82</div>
<div class="t" style="top:400.12px;font-size:12px;color:#000080;left:156.80px;transform:scaleX(0.8990);transform-origin:0 0;">244</div>
<div class="t" style="top:417.82px;font-size:12px;color:#000080;left:134.20px;transform:scaleX(0.8798);transform-origin:0 0;">1648790</div>
<div class="t" style="top:381.52px;font-size:12px;color:#000080;left:338.00px;transform:scaleX(0.8135);transform-origin:0 0;">0.19</div>
<div class="t" style="top:400.12px;font-size:12px;color:#000080;left:345.00px;transform:scaleX(0.7792);transform-origin:0 0;">21</div>
<div class="t" style="top:417.82px;font-size:12px;color:#000080;left:333.40px;transform:scaleX(0.8840);transform-origin:0 0;">1228</div>
<div class="t" style="top:381.52px;font-size:12px;color:#000080;left:501.80px;transform:scaleX(0.9266);transform-origin:0 0;">11.96</div>
<div class="t" style="top:400.12px;font-size:12px;color:#000080;left:507.70px;transform:scaleX(0.9034);transform-origin:0 0;">14.4</div>
<div class="t" style="top:381.52px;font-size:12px;color:#000080;left:532.30px;transform:scaleX(0.5904);transform-origin:0 0;">%</div>
<div class="t" style="top:400.12px;font-size:12px;color:#000080;left:532.30px;transform:scaleX(0.5904);transform-origin:0 0;">%</div>
<div class="t" style="top:423.32px;font-size:12px;color:#000;left:389.30px;transform:scaleX(0.8903);transform-origin:0 0;word-spacing:1.608px;">PO Failures:</div>
<div class="t" style="top:423.32px;font-size:12px;color:#000080;left:519.70px;transform:scaleX(0.8641);transform-origin:0 0;">344</div>
<div class="btn" style="left:562px;top:59px;width:66px;height:17px"><i></i></div>
<div class="btn" style="left:654px;top:59px;width:66.5px;height:17px"><i></i></div>
<div class="r" style="left:693px;top:75px;width:8px;height:1px;background:#000;"></div>
<div class="rg" style="left:561px;top:88px;width:160px;height:68px"></div>
<div class="r" style="left:567px;top:82px;width:63px;height:11px;background:#fff;"></div>
<div class="t" style="top:109.42px;font-size:12px;color:#000;left:569.00px;transform:scaleX(0.7565);transform-origin:0 0;">ID:</div>
<div class="t" style="top:138.82px;font-size:12px;color:#000;left:569.00px;transform:scaleX(0.8656);transform-origin:0 0;">Label:</div>
<div class="t" style="top:94.02px;font-size:12px;color:#000080;letter-spacing:0.125px;left:617.20px;">DVD-R</div>
<div class="t" style="top:109.42px;font-size:12px;color:#000080;left:617.20px;transform:scaleX(0.8736);transform-origin:0 0;word-spacing:1.703px;">CMC MAG. AE1</div>
<div class="t" style="top:124.32px;font-size:12px;color:#000080;left:617.20px;transform:scaleX(0.9174);transform-origin:0 0;word-spacing:1.462px;">15 August 2005</div>
<div class="t" style="top:138.82px;font-size:12px;color:#000080;left:617.20px;transform:scaleX(0.8509);transform-origin:0 0;">CDS_TEST_B2</div>
<div class="rg" style="left:561px;top:162px;width:160px;height:176px"></div>
<div class="r" style="left:567px;top:155px;width:46px;height:11px;background:#fff;"></div>
<div class="t" style="top:153.92px;font-size:12px;color:#0000ff;left:569.90px;transform:scaleX(0.9433);transform-origin:0 0;">Settings</div>
<div class="ed" style="left:631px;top:170px;width:80px;height:18px"></div>
<div class="cb" style="left:696px;top:172px;width:14px;height:14px"></div>
<svg class="a" style="left:699px;top:176px" width="10" height="8" viewBox="0 0 10 8"><path d="M1.5 1.5L5 5L8.5 1.5" stroke="#000" stroke-width="2" fill="none"/></svg>
<div class="t" style="top:173.32px;font-size:12px;color:#000;left:634.40px;transform:scaleX(0.9198);transform-origin:0 0;word-spacing:1.450px;">8 X</div>
<div class="ed" style="left:631px;top:194px;width:68px;height:16px"></div>
<div class="t" style="top:196.12px;font-size:12px;color:#000;left:633.90px;transform:scaleX(0.8765);transform-origin:0 0;">0000</div>
<div class="t" style="top:196.12px;font-size:12px;color:#000;left:663.40px;transform:scaleX(0.8222);transform-origin:0 0;">MB</div>
<div class="ed" style="left:631px;top:217px;width:68px;height:16px"></div>
<div class="t" style="top:219.12px;font-size:12px;color:#000;left:633.90px;transform:scaleX(0.8765);transform-origin:0 0;">4489</div>
<div class="t" style="top:219.12px;font-size:12px;color:#000;left:663.40px;transform:scaleX(0.8222);transform-origin:0 0;">MB</div>
<div class="ck" style="left:569px;top:242px"></div>
<div class="t" style="top:241.92px;font-size:12px;color:#000;left:585.00px;transform:scaleX(0.9082);transform-origin:0 0;word-spacing:1.511px;">Quick Scan</div>
<div class="ck" style="left:569px;top:261px"></div>
<svg class="a" style="left:569px;top:261px" width="13" height="13" viewBox="0 0 13 13"><path d="M3 5.4L6 8.4L10.5 3.9" stroke="#008000" stroke-width="2.6" fill="none"/></svg>
<div class="t" style="top:260.72px;font-size:12px;color:#000;left:585.00px;transform:scaleX(0.9245);transform-origin:0 0;word-spacing:1.425px;">Show C1/PIE</div>
<div class="ck" style="left:569px;top:276px"></div>
<svg class="a" style="left:569px;top:276px" width="13" height="13" viewBox="0 0 13 13"><path d="M3 5.4L6 8.4L10.5 3.9" stroke="#008000" stroke-width="2.6" fill="none"/></svg>
<div class="t" style="top:275.72px;font-size:12px;color:#000;left:585.00px;transform:scaleX(0.9338);transform-origin:0 0;word-spacing:1.378px;">Show C2/PIF</div>
<div class="ck" style="left:569px;top:291px"></div>
<svg class="a" style="left:569px;top:291px" width="13" height="13" viewBox="0 0 13 13"><path d="M3 5.4L6 8.4L10.5 3.9" stroke="#008000" stroke-width="2.6" fill="none"/></svg>
<div class="t" style="top:290.72px;font-size:12px;color:#000;left:585.00px;transform:scaleX(0.9639);transform-origin:0 0;word-spacing:1.231px;">Show Jitter</div>
<div class="ck" style="left:569px;top:306px"></div>
<svg class="a" style="left:569px;top:306px" width="13" height="13" viewBox="0 0 13 13"><path d="M3 5.4L6 8.4L10.5 3.9" stroke="#008000" stroke-width="2.6" fill="none"/></svg>
<div class="t" style="top:305.72px;font-size:12px;color:#000;left:585.00px;transform:scaleX(0.8736);transform-origin:0 0;word-spacing:1.702px;">Show Read Speed</div>
<div class="ck" style="left:569px;top:321px"></div>
<svg class="a" style="left:569px;top:321px" width="13" height="13" viewBox="0 0 13 13"><path d="M3 5.4L6 8.4L10.5 3.9" stroke="#008000" stroke-width="2.6" fill="none"/></svg>
<div class="t" style="top:320.72px;font-size:12px;color:#000;left:585.00px;transform:scaleX(0.8822);transform-origin:0 0;word-spacing:1.654px;">Show Write Speed</div>
<div class="a" style="left:584px;top:276px;width:69px;height:12px;border:1px dotted #000"></div>
<div class="rg" style="left:561px;top:344px;width:160px;height:22px"></div>
<div class="t" style="top:349.12px;font-size:12px;color:#000080;right:36.10px;">0</div>
<div class="rg" style="left:561px;top:374px;width:160px;height:61px"></div>
<div class="t" style="top:381.12px;font-size:12px;color:#000080;left:678.70px;transform:scaleX(0.8641);transform-origin:0 0;">100</div>
<div class="t" style="top:381.12px;font-size:12px;color:#000080;left:701.70px;transform:scaleX(0.5530);transform-origin:0 0;">%</div>
<div class="t" style="top:400.22px;font-size:12px;color:#000080;left:661.70px;transform:scaleX(0.9128);transform-origin:0 0;word-spacing:1.486px;">4488 MB</div>
<div class="t" style="top:417.72px;font-size:12px;color:#000080;left:677.00px;transform:scaleX(0.8642);transform-origin:0 0;word-spacing:1.758px;">8.35 X</div>
<svg class="a jt" style="left:0;top:0" width="743" height="449" viewBox="0 0 743 449">
<text x="26.5" y="393" fill="#000" textLength="26" lengthAdjust="spacingAndGlyphs">平均:</text>
<text x="26.5" y="411.7" fill="#000" textLength="26" lengthAdjust="spacingAndGlyphs">最大:</text>
<text x="26.5" y="429.3" fill="#000" textLength="30.5" lengthAdjust="spacingAndGlyphs">合計 :</text>
<text x="208.3" y="393" fill="#000" textLength="26" lengthAdjust="spacingAndGlyphs">平均:</text>
<text x="208.3" y="411.7" fill="#000" textLength="26" lengthAdjust="spacingAndGlyphs">最大:</text>
<text x="208.3" y="429.3" fill="#000" textLength="30.5" lengthAdjust="spacingAndGlyphs">合計 :</text>
<text x="389" y="393" fill="#000" textLength="26" lengthAdjust="spacingAndGlyphs">平均:</text>
<text x="389" y="411.7" fill="#000" textLength="26" lengthAdjust="spacingAndGlyphs">最大:</text>
<text x="583" y="73.2" fill="#000" textLength="23.5" lengthAdjust="spacingAndGlyphs">開始</text>
<text x="667.3" y="73.4" fill="#000" textLength="39" lengthAdjust="spacingAndGlyphs">終了(X)</text>
<text x="568.5" y="92" fill="#0000ff" textLength="59.5" lengthAdjust="spacingAndGlyphs">ディスク情報</text>
<text x="568.7" y="105.5" fill="#000" textLength="27.5" lengthAdjust="spacingAndGlyphs">タイプ:</text>
<text x="568.7" y="136.3" fill="#000" textLength="25.5" lengthAdjust="spacingAndGlyphs">日付:</text>
<text x="568.7" y="184.4" fill="#000" textLength="48" lengthAdjust="spacingAndGlyphs">転送速度</text>
<text x="568.7" y="209.2" fill="#000" textLength="22.5" lengthAdjust="spacingAndGlyphs">開始</text>
<text x="568.7" y="231.2" fill="#000" textLength="48" lengthAdjust="spacingAndGlyphs">終了位置</text>
<text x="568.7" y="360.8" fill="#000" textLength="51.5" lengthAdjust="spacingAndGlyphs">品質スコア:</text>
<text x="568.7" y="392.7" fill="#000" textLength="50" lengthAdjust="spacingAndGlyphs">進行状況:</text>
<text x="568.7" y="411.4" fill="#000" textLength="47.5" lengthAdjust="spacingAndGlyphs">ポジション:</text>
<text x="568.7" y="429.3" fill="#000" textLength="26" lengthAdjust="spacingAndGlyphs">速度:</text>
</svg></body></html>
